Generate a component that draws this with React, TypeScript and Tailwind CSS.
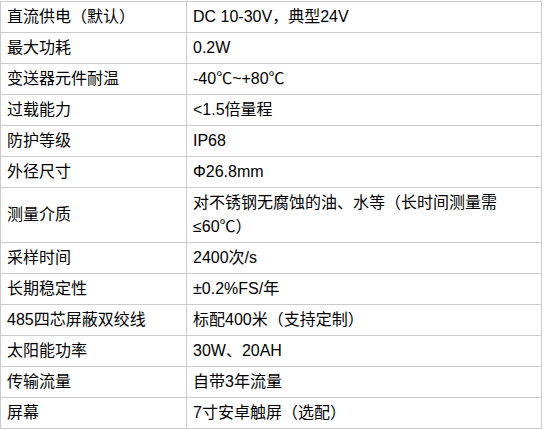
const rows: [string, string][] = [
  ['直流供电（默认）', 'DC 10-30V，典型24V'],
  ['最大功耗', '0.2W'],
  ['变送器元件耐温', '-40℃~+80℃'],
  ['过载能力', '<1.5倍量程'],
  ['防护等级', 'IP68'],
  ['外径尺寸', 'Φ26.8mm'],
  ['测量介质', '对不锈钢无腐蚀的油、水等（长时间测量需≤60℃）'],
  ['采样时间', '2400次/s'],
  ['长期稳定性', '±0.2%FS/年'],
  ['485四芯屏蔽双绞线', '标配400米（支持定制）'],
  ['太阳能功率', '30W、20AH'],
  ['传输流量', '自带3年流量'],
  ['屏幕', '7寸安卓触屏（选配）'],
]

export default function App() {
  return (
    <div className="w-[544px] h-[429px] pt-px bg-white font-['Liberation_Sans','Noto_Sans_CJK_SC',sans-serif] text-black">
      <table className="table-fixed border-collapse w-[542px] text-base leading-6">
        <colgroup>
          <col className="w-[186px]" />
          <col />
        </colgroup>
        <tbody>
          {rows.map(([label, value]) => (
            <tr key={label}>
              <td className="border border-[#cccccc] px-[6px] py-[3px] align-middle">{label}</td>
              <td className="border border-[#cccccc] px-[6px] py-[3px] align-middle">{value}</td>
            </tr>
          ))}
        </tbody>
      </table>
    </div>
  )
}
